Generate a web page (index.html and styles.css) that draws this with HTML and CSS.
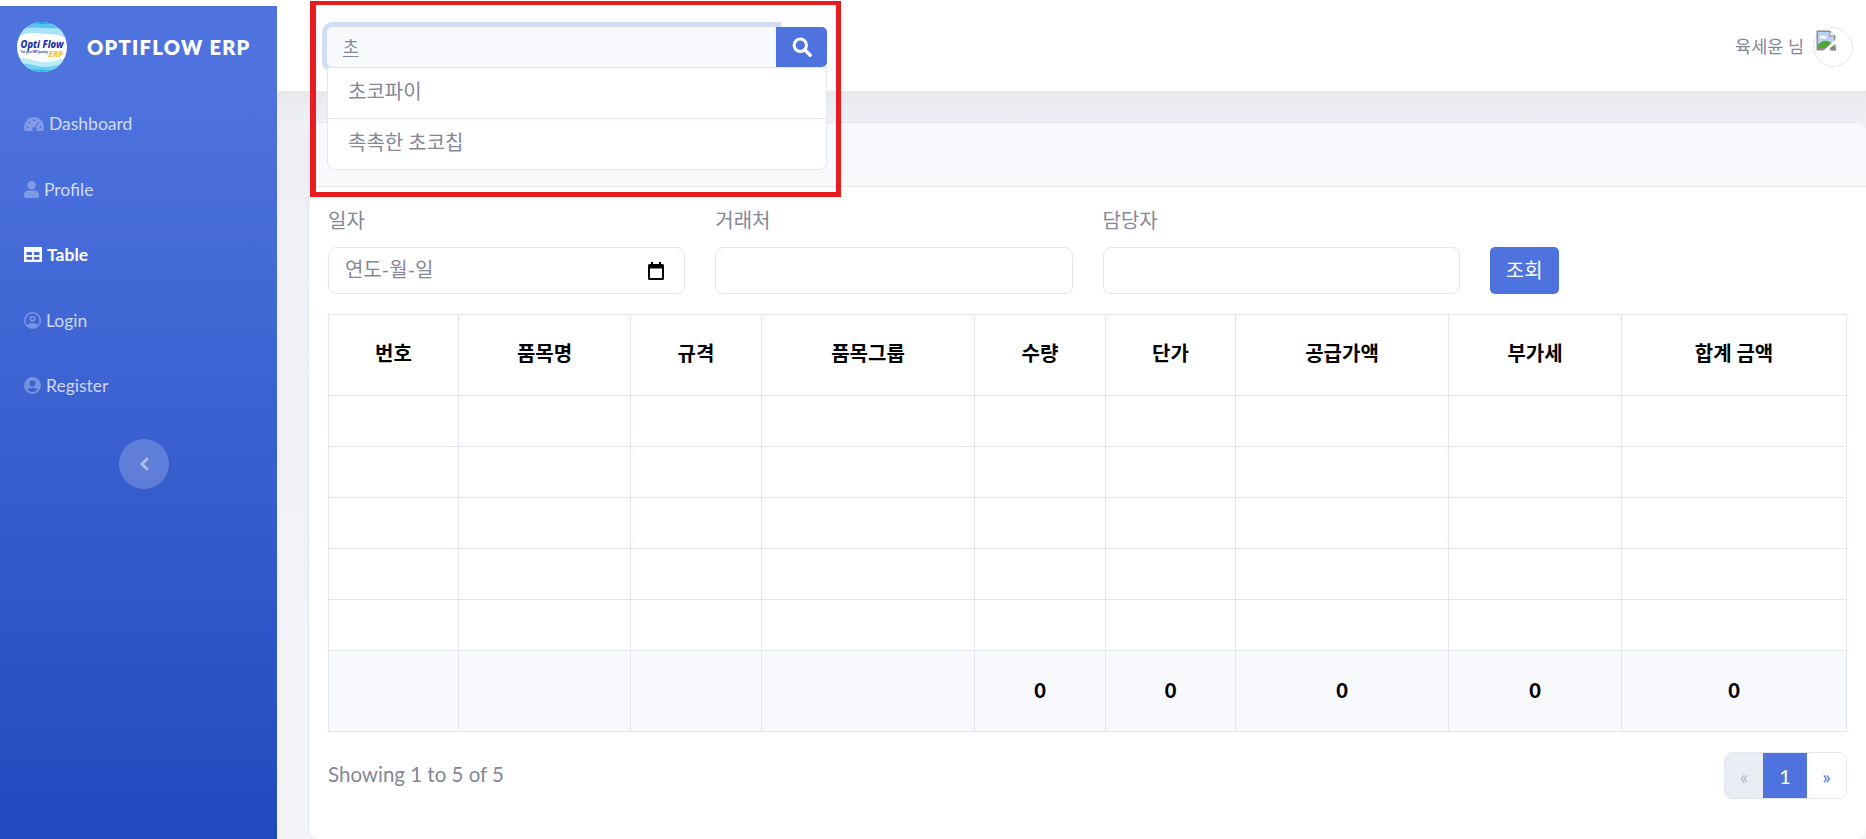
FILE: index.html
```html
<!DOCTYPE html>
<html lang="ko">
<head>
  <meta charset="UTF-8">
  <title>OPTIFLOW ERP</title>
  <link rel="stylesheet" href="styles.css">
</head>
<body>
  <div class="wrapper">
    <aside class="sidebar">
      <div class="brand">
        <svg class="brand-logo" viewBox="0 0 50 50">
          <defs><clipPath id="logoClip"><circle cx="25" cy="25" r="25"/></clipPath></defs>
          <g clip-path="url(#logoClip)">
            <rect width="50" height="50" fill="#fff"/>
            <path d="M0 0H50V17C42 11 36 13 28 12C18 11 10 9 0 16Z" fill="#a8e4f7"/>
            <path d="M0 0H50V9C42 5 34 7 26 6C16 5 8 5 0 9Z" fill="#55c4ee"/>
            <path d="M0 0H50V3C40 1 30 2 20 1.500C12 1 6 2 0 3Z" fill="#1f9fdc"/>
            <path d="M0 37C8 34 14 38 24 40C34 41 42 37 50 36V50H0Z" fill="#bdebf8"/>
            <path d="M0 42C10 40 18 44 26 45C36 45 42 42 50 42V50H0Z" fill="#6cd0f0"/>
            <path d="M10 47C18 47 30 49 40 47V50H10Z" fill="#35b4e6"/>
            <text x="25" y="26" textLength="43" lengthAdjust="spacingAndGlyphs" class="logo-name">Opti Flow</text>
            <text x="4" y="31" class="logo-tag">For your ERP Journey</text>
            <text x="46" y="35" class="logo-erp">ERP</text>
          </g>
        </svg>
        <span class="brand-text">OPTIFLOW ERP</span>
      </div>
      <nav class="nav">
        <a class="nav-link">
          <svg class="nav-icon gauge" viewBox="0 0 20 14"><path d="M10 0a10 10 0 0 0-10 10c0 1.500.3 2.800.8 4h18.400c.5-1.200.8-2.500.8-4A10 10 0 0 0 10 0zM10 2.200a1 1 0 1 1 0 2 1 1 0 0 1 0-2zM3.500 9.200a1 1 0 1 1 0 2 1 1 0 0 1 0-2zM5.500 4.500a1 1 0 1 1 0 2 1 1 0 0 1 0-2zM16.500 9.200a1 1 0 1 1 0 2 1 1 0 0 1 0-2zM14.300 4.600l.9.5-3.300 5.400a2.200 2.200 0 1 1-1-.5z" fill-rule="evenodd"/></svg>
          <span>Dashboard</span>
        </a>
        <a class="nav-link">
          <svg class="nav-icon person" viewBox="0 0 16 18"><circle cx="8" cy="4.500" r="4.500"/><path d="M4.500 10h7A4.500 4.500 0 0 1 16 14.500V16.300A1.700 1.700 0 0 1 14.300 18H1.700A1.700 1.700 0 0 1 0 16.300V14.500A4.500 4.500 0 0 1 4.500 10z"/></svg>
          <span>Profile</span>
        </a>
        <a class="nav-link active">
          <svg class="nav-icon grid" viewBox="0 0 18 15"><path fill-rule="evenodd" d="M0 0H18V15H0ZM2.500 5V8H8V5ZM10 5V8H15.500V5ZM2.500 10V12.800H8V10ZM10 10V12.800H15.500V10Z"/></svg>
          <span>Table</span>
        </a>
        <a class="nav-link">
          <svg class="nav-icon ring" viewBox="0 0 18 18"><path fill-rule="evenodd" d="M9 0a9 9 0 1 1 0 18A9 9 0 0 1 9 0zM9 1.700a7.300 7.300 0 0 0-5.500 12.100A5.500 5.500 0 0 1 7 11.900h4a5.500 5.500 0 0 1 3.500 1.900A7.300 7.300 0 0 0 9 1.700zM9 4a3.200 3.200 0 1 1 0 6.400A3.200 3.200 0 0 1 9 4zM9 5.700a1.500 1.500 0 1 0 0 3 1.500 1.500 0 0 0 0-3z"/></svg>
          <span>Login</span>
        </a>
        <a class="nav-link">
          <svg class="nav-icon ring" viewBox="0 0 18 18"><path fill-rule="evenodd" d="M9 0a9 9 0 1 1 0 18A9 9 0 0 1 9 0zM9 3.800a3.200 3.200 0 1 0 0 6.400 3.200 3.200 0 0 0 0-6.400zM9 16a7 7 0 0 0 5.400-2.500A4 4 0 0 0 11 11.600H7a4 4 0 0 0-3.400 1.900A7 7 0 0 0 9 16z"/></svg>
          <span>Register</span>
        </a>
      </nav>
      <button class="toggle">
        <svg viewBox="0 0 10 14" width="10" height="14"><path d="M8 2 3 7l5 5" fill="none" stroke="currentColor" stroke-width="2.800" stroke-linecap="round" stroke-linejoin="round"/></svg>
      </button>
    </aside>

    <div class="main">
      <header class="topbar">
        <div class="search">
          <div class="search-input"><span class="composing">초</span></div>
          <button class="search-btn">
            <svg viewBox="0 0 20 20" width="20" height="20"><circle cx="8.300" cy="8.300" r="6.200" fill="none" stroke="#fff" stroke-width="3"/><path d="M13 13l5.200 5.200" stroke="#fff" stroke-width="3.400" stroke-linecap="round"/></svg>
          </button>
          <ul class="suggest">
            <li>초코파이</li>
            <li>촉촉한 초코칩</li>
          </ul>
        </div>
        <div class="user">
          <span class="user-name">육세윤 님</span>
          <span class="avatar">
            <svg class="broken" viewBox="0 0 20 21" width="20" height="21">
              <path d="M.5.5H14L19.500 6V20.500H.5Z" fill="#8d8d8d"/>
              <path d="M2 2H13.500V6.500H18V18H2Z" fill="#bcd0f3"/>
              <path d="M14.500 1.500 18.500 5.500H14.500Z" fill="#fff"/>
              <path d="M4 7c0-1.500 2.500-2 3.500-1 1.500-.5 3 .5 3 1.500 1 0 1 1-.5 1H5C3.500 8.500 3 7.500 4 7z" fill="#fff"/>
              <path d="M2 18V15C6 10 10 10 14 12L18 15V18Z" fill="#4ea72e"/>
              <path d="M7 21 20 9V13.500L14 18V21Z" fill="#fff"/>
              <path d="M15.500 20.500 20 16.500V20.500Z" fill="#8d8d8d"/>
            </svg>
          </span>
        </div>
      </header>

      <div class="content">
        <section class="card">
          <div class="card-header"></div>
          <div class="card-body">
            <div class="filters">
              <div class="field">
                <label>일자</label>
                <div class="input date"><span class="date-text">연도-월-일</span>
                  <svg viewBox="0 0 16 18" width="16" height="18"><path fill="#000" fill-rule="evenodd" d="M3 0h2v2h6V0h2v2h1.500A1.500 1.500 0 0 1 16 3.500v13a1.500 1.500 0 0 1-1.500 1.500h-13A1.500 1.500 0 0 1 0 16.500v-13A1.500 1.500 0 0 1 1.500 2H3zM2 6.500V16h12V6.500z"/></svg>
                </div>
              </div>
              <div class="field">
                <label>거래처</label>
                <div class="input"></div>
              </div>
              <div class="field">
                <label>담당자</label>
                <div class="input"></div>
              </div>
              <button class="btn-search">조회</button>
            </div>

            <table class="grid-table">
              <colgroup>
                <col class="c1"><col class="c2"><col class="c3"><col class="c4"><col class="c5">
                <col class="c6"><col class="c7"><col class="c8"><col class="c9">
              </colgroup>
              <thead>
                <tr><th>번호</th><th>품목명</th><th>규격</th><th>품목그룹</th><th>수량</th><th>단가</th><th>공급가액</th><th>부가세</th><th>합계 금액</th></tr>
              </thead>
              <tbody>
                <tr><td></td><td></td><td></td><td></td><td></td><td></td><td></td><td></td><td></td></tr>
                <tr><td></td><td></td><td></td><td></td><td></td><td></td><td></td><td></td><td></td></tr>
                <tr><td></td><td></td><td></td><td></td><td></td><td></td><td></td><td></td><td></td></tr>
                <tr><td></td><td></td><td></td><td></td><td></td><td></td><td></td><td></td><td></td></tr>
                <tr><td></td><td></td><td></td><td></td><td></td><td></td><td></td><td></td><td></td></tr>
              </tbody>
              <tfoot>
                <tr><td></td><td></td><td></td><td></td><td>0</td><td>0</td><td>0</td><td>0</td><td>0</td></tr>
              </tfoot>
            </table>

            <div class="table-foot">
              <span class="showing">Showing 1 to 5 of 5</span>
              <div class="pager">
                <span class="page prev">«</span>
                <span class="page current">1</span>
                <span class="page next">»</span>
              </div>
            </div>
          </div>
        </section>
      </div>
    </div>
  </div>
  <div class="highlight"></div>
</body>
</html>
```

FILE: styles.css
```css
* {
  box-sizing: border-box;
}
html, body {
  height: 100%;
}
body {
  margin: 0;
  height: 839px;
  overflow: hidden;
  background: #fff;
  color: #858796;
  font-family: 'Lato', 'Noto Sans CJK KR', sans-serif;
  font-size: 20px;
}
.wrapper {
  display: flex;
  height: 839px;
}

/* sidebar */
.sidebar {
  width: 277px;
  flex: none;
  margin-top: 6px;
  padding: 16px 0 0;
  background: linear-gradient(180deg, #4e73df 10%, #224abe 100%);
}
.brand {
  display: flex;
  align-items: center;
  height: 50px;
  padding-left: 17px;
  gap: 20px;
}
.brand-logo {
  width: 50px;
  height: 50px;
}
.logo-name {
  font-family: 'Noto Sans', sans-serif;
  font-size: 10px;
  font-weight: 800;
  font-style: italic;
  fill: #2030a8;
  text-anchor: middle;
}
.logo-tag {
  font-family: 'Noto Sans', sans-serif;
  font-size: 2.600px;
  font-weight: 700;
  fill: #2030a8;
}
.logo-erp {
  font-family: 'Noto Sans', sans-serif;
  font-size: 8px;
  font-weight: 800;
  font-style: italic;
  fill: #f2c230;
  text-anchor: end;
}
.brand-text {
  color: #fff;
  font-family: 'Lato', sans-serif;
  font-size: 20px;
  font-weight: 800;
  letter-spacing: 1.300px;
}
.nav {
  display: flex;
  flex-direction: column;
  margin-top: 19px;
}
.nav-link {
  display: flex;
  align-items: center;
  gap: 5px;
  height: 65.500px;
  padding-left: 24px;
  color: rgba(255,255,255,.75);
  font-size: 17.500px;
}
.nav-link.active {
  color: #fff;
  font-weight: 700;
}
.nav-icon {
  fill: rgba(255,255,255,.3);
  flex: none;
}
.nav-link.active .nav-icon {
  fill: #fff;
}
.gauge { width: 20px; height: 14px; }
.person { width: 15px; height: 17px; }
.grid { width: 18px; height: 15px; }
.ring { width: 17px; height: 17px; }
.toggle {
  display: flex;
  align-items: center;
  justify-content: center;
  width: 50px;
  height: 50px;
  margin: 20px 0 0 119px;
  border: none;
  border-radius: 50%;
  color: rgba(255,255,255,.5);
  background: rgba(255,255,255,.2);
}

/* top bar */
.main {
  flex: 1;
  min-width: 0;
  display: flex;
  flex-direction: column;
  background: #f2f3f8;
}
.topbar {
  display: flex;
  align-items: flex-start;
  justify-content: space-between;
  height: 91px;
  padding: 27px 13px 0 50px;
  background: #fff;
}
.search {
  position: relative;
  display: flex;
  width: 500px;
  height: 40px;
}
.search-input {
  flex: 1;
  display: flex;
  align-items: center;
  padding: 0 16px 4px;
  background: #f8f9fc;
  border-radius: 5px 0 0 5px;
  box-shadow: 0 0 0 5px rgba(78,115,223,.25);
  font-size: 17px;
  color: #858796;
}
.composing {
  text-decoration: underline;
  text-decoration-skip-ink: none;
  text-underline-offset: 3px;
}
.search-btn {
  position: relative;
  display: flex;
  align-items: center;
  justify-content: center;
  width: 51px;
  border: none;
  border-radius: 0 5px 5px 0;
  background: #4e73df;
}
.suggest {
  position: absolute;
  top: 40px;
  left: 0;
  width: 500px;
  margin: 0;
  padding: 0;
  list-style: none;
  background: #fff;
  border: 1px solid #e3e6f0;
  border-radius: 0 0 8px 8px;
}
.suggest li {
  height: 50px;
  line-height: 47px;
  padding-left: 20px;
}
.suggest li + li {
  height: 51px;
  border-top: 1px solid #e3e6f0;
}
.user {
  display: flex;
  align-items: center;
  gap: 9px;
  font-size: 17.500px;
}
.user-name {
  padding-bottom: 4px;
}
.avatar {
  width: 40px;
  height: 40px;
  padding: 2px 0 0 2px;
  border: 1px solid #e3e6f0;
  border-radius: 50%;
}
.broken {
  display: block;
}

/* content */
.content {
  flex: 1;
  padding: 31px 0 0 31px;
  background: linear-gradient(180deg, #e8e9ed 0, #eff0f5 31px, #f3f4f9 100%);
}
.card {
  height: 100%;
  background: #fff;
  border: 1px solid #e3e6f0;
  border-right: none;
  border-bottom: none;
  border-radius: 10px;
}
.card-header {
  height: 64px;
  background: #f8f9fc;
  border-bottom: 1px solid #e3e6f0;
  border-radius: 10px 10px 0 0;
}
.card-body {
  padding: 19px 19px 0;
}
.filters {
  display: flex;
  align-items: flex-end;
  gap: 30px;
}
.field {
  width: 357.250px;
}
.field label {
  display: block;
  line-height: 28px;
  margin-bottom: 13px;
}
.input {
  display: flex;
  align-items: center;
  justify-content: space-between;
  height: 47px;
  padding: 0 16px;
  border: 1px solid #e3e6f0;
  border-radius: 8px;
}
.date svg {
  margin-right: 4px;
}
.date-text {
  padding-bottom: 5px;
  color: #858796;
}
.btn-search {
  width: 69px;
  height: 47px;
  padding-bottom: 3px;
  border: none;
  border-radius: 5px;
  background: #4e73df;
  color: #fff;
  font-family: inherit;
  font-size: 20px;
}

/* table */
.grid-table {
  width: 1518px;
  margin-top: 20px;
  border-collapse: collapse;
  table-layout: fixed;
  color: #000;
}
.c1 { width: 130px; }
.c2 { width: 172px; }
.c3 { width: 131px; }
.c4 { width: 213px; }
.c5 { width: 131px; }
.c6 { width: 130px; }
.c7 { width: 213px; }
.c8 { width: 173px; }
.c9 { width: 225px; }
.grid-table th, .grid-table td {
  border: 1px solid #e3e6f0;
  text-align: center;
  font-weight: 700;
  padding: 0;
}
.grid-table th {
  height: 81px;
  padding-bottom: 5px;
}
.grid-table tbody td {
  height: 51px;
}
.grid-table tfoot td {
  height: 81px;
  padding-bottom: 2px;
  background: #f8f9fc;
  font-weight: 900;
}

/* pagination */
.table-foot {
  display: flex;
  align-items: center;
  justify-content: space-between;
  width: 1519px;
  margin-top: 20px;
}
.showing {
  padding-bottom: 3px;
  font-size: 20.500px;
}
.pager {
  display: flex;
  height: 47px;
  border: 1px solid #e3e6f0;
  border-radius: 8px;
  overflow: hidden;
}
.page {
  display: flex;
  align-items: center;
  justify-content: center;
}
.prev {
  width: 38px;
  background: #eaecf4;
  color: #b7b9cc;
  font-size: 20px;
}
.current {
  width: 44px;
  background: #4e73df;
  color: #fff;
}
.next {
  width: 39px;
  color: #4e73df;
  font-size: 20px;
}

/* red annotation box */
.highlight {
  position: absolute;
  left: 310px;
  top: 1px;
  width: 531px;
  height: 196px;
  border: 5px solid #e81c1f;
  border-top-width: 4px;
  border-left-width: 6px;
}
```
